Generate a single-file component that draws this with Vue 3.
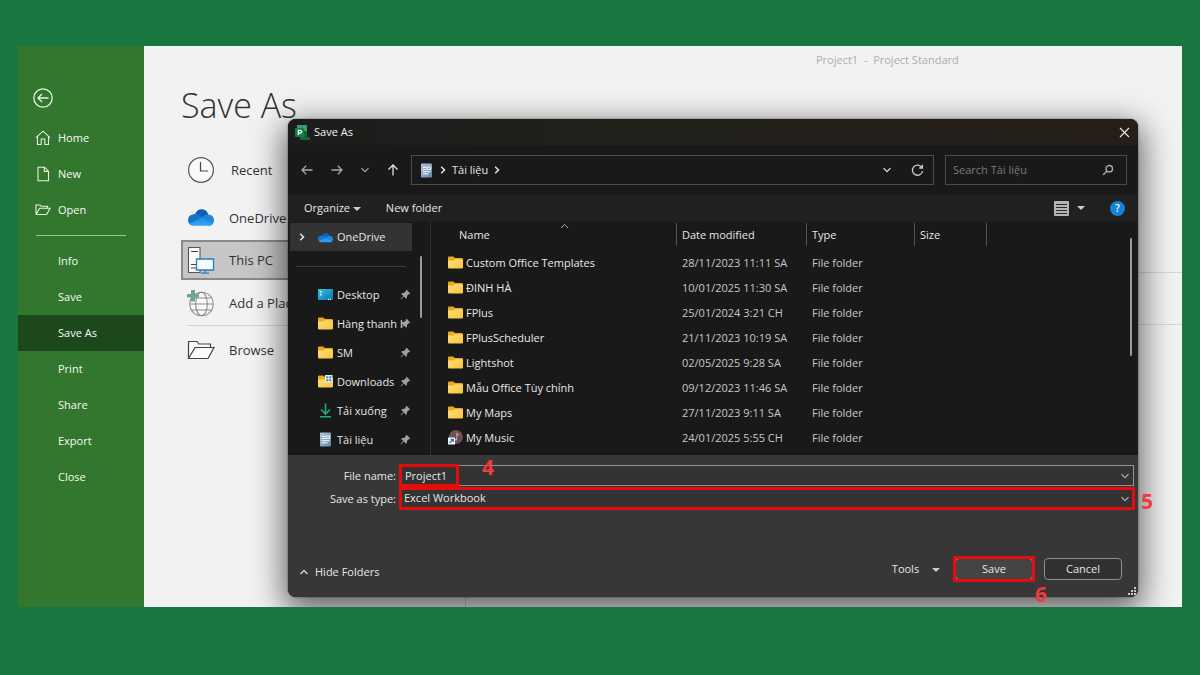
<script setup>
import { ref } from 'vue'

const mainNav = [
  { label: 'Home', icon: 'home' },
  { label: 'New', icon: 'new' },
  { label: 'Open', icon: 'open' },
]
const fileNav = ['Info', 'Save', 'Save As', 'Print', 'Share', 'Export', 'Close']

const pinned = [
  { label: 'Desktop', icon: 'desktop' },
  { label: 'Hàng thanh l', icon: 'folder' },
  { label: 'SM', icon: 'folder' },
  { label: 'Downloads', icon: 'downloads' },
  { label: 'Tải xuống', icon: 'arrow' },
  { label: 'Tài liệu', icon: 'doc' },
]

const files = [
  { name: 'Custom Office Templates', date: '28/11/2023 11:11 SA', icon: 'folder' },
  { name: 'ĐINH HÀ', date: '10/01/2025 11:30 SA', icon: 'folder' },
  { name: 'FPlus', date: '25/01/2024 3:21 CH', icon: 'folder' },
  { name: 'FPlusScheduler', date: '21/11/2023 10:19 SA', icon: 'folder' },
  { name: 'Lightshot', date: '02/05/2025 9:28 SA', icon: 'folder' },
  { name: 'Mẫu Office Tùy chỉnh', date: '09/12/2023 11:46 SA', icon: 'folder' },
  { name: 'My Maps', date: '27/11/2023 9:11 SA', icon: 'folder' },
  { name: 'My Music', date: '24/01/2025 5:55 CH', icon: 'music' },
]

const fileName = ref('Project1')
const fileType = ref('Excel Workbook')
</script>

<template>
  <div class="page">
    <svg class="defs" aria-hidden="true">
      <defs>
        <linearGradient id="g-folder" x1="0" y1="0" x2="1" y2="1">
          <stop offset="0" stop-color="#ffe07d" />
          <stop offset="1" stop-color="#f8c33c" />
        </linearGradient>
        <linearGradient id="g-desk" x1="0" y1="0" x2="1" y2="1">
          <stop offset="0" stop-color="#35c8e0" />
          <stop offset="1" stop-color="#0c6fb4" />
        </linearGradient>
        <linearGradient id="g-doc" x1="0" y1="0" x2="1" y2="1">
          <stop offset="0" stop-color="#b3c9e0" />
          <stop offset="1" stop-color="#6583a6" />
        </linearGradient>
        <linearGradient id="g-cloud" x1="0" y1="0" x2="0" y2="1">
          <stop offset="0" stop-color="#1f8fe4" />
          <stop offset="1" stop-color="#2fa8f2" />
        </linearGradient>
      </defs>
      <symbol id="i-folder" viewBox="0 0 15 13">
        <path d="M0 1.5Q0 .5 1 .5H5.2L7 2H13.5Q15 2 15 3.2V7H0Z" fill="#eba91c" />
        <path d="M0 4.5H5.4L7 3.2H14Q15 3.2 15 4.2V11.5Q15 12.5 14 12.5H1Q0 12.5 0 11.5Z" fill="url(#g-folder)" />
      </symbol>
      <symbol id="i-downloads" viewBox="0 0 15 13">
        <path d="M0 1.5Q0 .5 1 .5H5.2L7 2H13.5Q15 2 15 3.2V7H0Z" fill="#eba91c" />
        <path d="M0 4.5H5.4L7 3.2H14Q15 3.2 15 4.2V11.5Q15 12.5 14 12.5H1Q0 12.5 0 11.5Z" fill="url(#g-folder)" />
        <path d="M7 0H14.5V7.5H7Z" fill="#e8eef2" />
        <path d="M8.3 1.3H10.3V3.2H8.3ZM11.3 1.3H13.3V3.2H11.3ZM8.3 4.2H10.3V6.2H8.3ZM11.3 4.2H13.3V6.2H11.3Z" fill="#4a86a8" />
      </symbol>
      <symbol id="i-desktop" viewBox="0 0 15 13">
        <rect x="0" y="1" width="15" height="11" rx="1" fill="url(#g-desk)" />
        <path d="M2 3H3.6V4.6H2ZM2 5.8H3.6V7.4H2Z" fill="#e6fbff" />
        <path d="M10 10.8H11V12H10ZM12 10.8H13V12H12Z" fill="#d8f4ff" />
      </symbol>
      <symbol id="i-arrow" viewBox="0 0 15 15">
        <path d="M7.5 .5V10.5M3 6.5L7.5 11L12 6.5M2 13.8H13" fill="none" stroke="#22a884" stroke-width="1.6" />
      </symbol>
      <symbol id="i-doc" viewBox="0 0 15 15">
        <rect x="2" y=".5" width="11" height="14" rx=".8" fill="url(#g-doc)" />
        <path d="M4 4.5H7M8 4H11.5V6.5H8ZM4 6.5H7M4 8.7H11.5M4 10.8H9.5" fill="none" stroke="#f4f8fc" stroke-width="1" />
      </symbol>
      <symbol id="i-music" viewBox="0 0 15 15">
        <circle cx="7.8" cy="7" r="7" fill="#7a4f50" />
        <circle cx="9" cy="8" r="3.6" fill="#4d4a68" opacity=".7" />
        <path d="M8.8 9.5V3.2Q9 5 11 5.6" fill="none" stroke="#c9b8c4" stroke-width=".9" />
        <circle cx="8" cy="9.7" r="1" fill="#c9b8c4" />
        <rect x="0" y="7.5" width="7" height="7" fill="#f6f8fa" />
        <path d="M1.5 13L4.8 9.8M2.7 9.3H5.3V11.9" fill="none" stroke="#1976c8" stroke-width="1.2" />
      </symbol>
      <symbol id="i-cloud" viewBox="0 0 26 17">
        <path d="M7 5.5Q9 .3 13.5 .3Q18.5 .3 20.3 5.4L14 11Z" fill="#0c5fb3" />
        <path d="M5 16.5Q0 15.8 0 11Q.2 6 5.3 5.2Q8 4.3 11 6L20 11Z" fill="#1276d0" />
        <path d="M12 9.5L17 6.3Q19 5 21 5.6Q26 6.8 26 11.5Q25.6 16.2 21 16.7Z" fill="#1c86dd" />
        <path d="M1.6 14.6L13.5 8.8L25 14.7Q23.5 16.8 20.8 16.8H5.5Q3 16.6 1.6 14.6Z" fill="url(#g-cloud)" />
      </symbol>
      <symbol id="i-pin" viewBox="0 0 11 11">
        <path d="M6.6 .8L10.2 4.4L9.4 5.2L8.9 5L7 7L6.9 9L6 9.7L3.9 7.6L1.2 10.2L.7 10.3L.8 9.8L3.4 7.1L1.3 5L2 4.1L4 4L6 2.1L5.8 1.6Z" fill="#9aa2a8" />
      </symbol>
      <symbol id="i-down" viewBox="0 0 10 10">
        <path d="M1.5 3.2L5 6.7L8.5 3.2" fill="none" stroke="currentColor" stroke-width="1.2" />
      </symbol>
      <symbol id="i-right" viewBox="0 0 10 10">
        <path d="M3.2 1.8L6.5 5L3.2 8.2" fill="none" stroke="currentColor" stroke-width="1.5" />
      </symbol>
    </svg>

    <main class="window">
      <nav class="sidebar">
        <button class="back" aria-label="Back">
          <svg width="20" height="20" viewBox="0 0 20 20" fill="none" stroke="#e6f2e2" stroke-width="1.3">
            <circle cx="10" cy="10" r="9.2" />
            <path d="M15.5 10H5.2M9 6L5 10L9 14" />
          </svg>
        </button>
        <a v-for="n in mainNav" :key="n.label" href="#" class="nav-item">
          <svg width="16" height="16" viewBox="0 0 16 16" fill="none" stroke="#e6f2e2" stroke-width="1.1">
            <path v-if="n.icon === 'home'" d="M1 7.6L8 1.2L15 7.6M2.5 6.4V14.5H6.2V9H9.8V14.5H13.5V6.4" />
            <path v-else-if="n.icon === 'new'" d="M3 1.2H9.5L13.5 5.2V14.8H3ZM9.3 1.4V5.4H13.3" />
            <path v-else d="M1 12.5V3H5L6.2 4.3H12.5V6.2M1 12.5H11.6L15.2 6.2H4.6L1.2 12.3" />
          </svg>
          <span>{{ n.label }}</span>
        </a>
        <hr class="nav-line" />
        <a v-for="n in fileNav" :key="n" href="#" class="nav-item plain" :class="{ active: n === 'Save As' }">{{ n }}</a>
      </nav>

      <section class="places">
        <h1>Save As</h1>
        <button class="place recent">
          <svg width="28" height="28" viewBox="0 0 28 28" fill="none">
            <circle cx="14" cy="14" r="12.4" fill="#fafafa" stroke="#555" stroke-width="1.2" />
            <path d="M13.5 6V15H21" stroke="#444" stroke-width="1.2" />
          </svg>
          <span>Recent</span>
        </button>
        <button class="place cloud">
          <svg width="28" height="18"><use href="#i-cloud" x="1" width="26" height="17" /></svg>
          <span>OneDrive</span>
        </button>
        <button class="place selected">
          <svg width="28" height="28" viewBox="0 0 28 28" fill="none">
            <path d="M1.5 1.5H13V26.5H1.5Z" fill="#fafafa" stroke="#555" stroke-width="1.1" />
            <path d="M4 5.5H11M4 18.5H9M4 22H9" stroke="#444" stroke-width="1.2" />
            <path d="M9.5 13H26.5V24H9.5Z" fill="#f6fbff" stroke="#2e7cb8" stroke-width="1.3" />
            <path d="M18 24V27M14 27.2H22" stroke="#2e7cb8" stroke-width="1.3" />
          </svg>
          <span>This PC</span>
        </button>
        <button class="place add">
          <svg width="28" height="28" viewBox="0 0 28 28" fill="none">
            <g stroke="#8c8c8c" stroke-width="1.1">
              <circle cx="14.5" cy="15" r="11.7" fill="#f8f8f8" />
              <ellipse cx="14.5" cy="15" rx="5.8" ry="11.7" />
              <path d="M3 15H26M5 9H24M5 21H24" />
            </g>
            <path d="M4 1H8V5H12V8.5H8V12.5H4V8.5H0V5H4Z" fill="#6fa594" />
          </svg>
          <span>Add a Place</span>
        </button>
        <hr class="place-line" />
        <button class="place browse">
          <svg width="28" height="20" viewBox="0 0 28 20" fill="none" stroke="#444" stroke-width="1.2">
            <path d="M1.5 18.5V1.5H10L12 4H23.5V7.5" fill="#fafafa" />
            <path d="M1.5 18.5H21L27 7.5H8Z" fill="#fafafa" />
          </svg>
          <span>Browse</span>
        </button>
      </section>

      <section class="detail">
        <p class="doc-title">Project1&nbsp; -&nbsp; Project Standard</p>
        <div class="detail-body">
          <div class="detail-row"></div>
        </div>
      </section>

      <section class="dialog" role="dialog" aria-label="Save As">
        <header class="titlebar">
          <svg width="15" height="15" viewBox="0 0 15 15">
            <path d="M2 0H12V8H2Z" fill="#33a06b" />
            <path d="M5 6H12V12L15 12V15H5Z" fill="#17633c" />
            <rect x="0" y="3" width="9" height="9" rx="1" fill="#138048" />
            <path d="M3.4 10V5.4H5.2A1.4 1.4 0 0 1 5.2 8.2H3.6" fill="none" stroke="#fff" stroke-width="1.3" />
          </svg>
          <h2>Save As</h2>
          <button class="close" aria-label="Close">
            <svg width="11" height="11" viewBox="0 0 11 11" stroke="#eee" stroke-width="1.1"><path d="M1 1L10 10M10 1L1 10" /></svg>
          </button>
        </header>

        <div class="navbar">
          <div class="arrows">
            <button aria-label="Back"><svg class="dim" width="14" height="14" viewBox="0 0 14 14"><path d="M12.5 7H2M6.2 2.8L2 7L6.2 11.2" /></svg></button>
            <button aria-label="Forward"><svg class="dim" width="14" height="14" viewBox="0 0 14 14"><path d="M1.5 7H12M7.8 2.8L12 7L7.8 11.2" /></svg></button>
            <button aria-label="Recent locations"><svg class="small" width="10" height="10"><use href="#i-down" width="10" height="10" /></svg></button>
            <button aria-label="Up"><svg class="bright" width="14" height="14" viewBox="0 0 14 14"><path d="M7 12.5V2M2.5 6.5L7 2L11.5 6.5" /></svg></button>
          </div>
          <div class="address">
            <svg width="15" height="15"><use href="#i-doc" width="15" height="15" /></svg>
            <svg width="10" height="10"><use href="#i-right" width="10" height="10" /></svg>
            <button class="crumb">Tài liệu</button>
            <svg width="10" height="10"><use href="#i-right" width="10" height="10" /></svg>
            <button class="push" aria-label="Previous locations"><svg width="10" height="10"><use href="#i-down" width="10" height="10" /></svg></button>
            <button aria-label="Refresh">
              <svg width="13" height="13" viewBox="0 0 13 13" fill="none" stroke="#ccc" stroke-width="1.3">
                <path d="M11 3.6A5.1 5.1 0 1 0 11.6 7M11.4 .8V4H8.2" />
              </svg>
            </button>
          </div>
          <label class="search">
            <input type="text" placeholder="Search Tài liệu" aria-label="Search Tài liệu" />
            <svg width="12" height="12" viewBox="0 0 12 12" fill="none" stroke="#aaa" stroke-width="1.4">
              <circle cx="7.3" cy="4.7" r="3.2" />
              <path d="M5 7L1.2 10.8" />
            </svg>
          </label>
        </div>

        <div class="toolbar">
          <button>Organize <i class="tri"></i></button>
          <button>New folder</button>
          <button class="view" aria-label="Change view">
            <svg width="15" height="15" viewBox="0 0 15 15">
              <rect width="15" height="15" rx="1" fill="#b4b4b4" />
              <path d="M2 3.5H13M2 6.5H13M2 9.5H13M2 12.5H13" stroke="#2a2a2a" stroke-width="1" />
            </svg>
            <i class="tri"></i>
          </button>
          <button class="help" aria-label="Help">?</button>
        </div>

        <div class="browser">
          <div class="tree">
            <button class="tree-item root">
              <svg width="10" height="12"><use href="#i-right" width="10" height="12" /></svg>
              <svg width="15" height="11"><use href="#i-cloud" width="15" height="11" /></svg>
              <span>OneDrive</span>
            </button>
            <hr />
            <button v-for="p in pinned" :key="p.label" class="tree-item">
              <svg width="15" height="15"><use :href="'#i-' + p.icon" width="15" height="15" /></svg>
              <span>{{ p.label }}</span>
              <svg class="pin" width="11" height="11"><use href="#i-pin" width="11" height="11" /></svg>
            </button>
            <i class="thumb"></i>
          </div>
          <div class="list">
            <table>
              <colgroup><col class="c-name" /><col class="c-date" /><col class="c-type" /><col class="c-size" /><col /></colgroup>
              <thead>
                <tr>
                  <th class="first">
                    <div>Name</div>
                    <svg class="sort" width="9" height="6" viewBox="0 0 9 6" fill="none" stroke="#aaa"><path d="M1 5L4.5 1.3L8 5" /></svg>
                  </th>
                  <th><div>Date modified</div></th>
                  <th><div>Type</div></th>
                  <th><div>Size</div></th>
                  <th><div></div></th>
                </tr>
              </thead>
              <tbody>
                <tr v-for="f in files" :key="f.name">
                  <td class="name"><div><svg width="15" height="15"><use :href="'#i-' + f.icon" width="15" height="15" /></svg>{{ f.name }}</div></td>
                  <td>{{ f.date }}</td>
                  <td>File folder</td>
                  <td></td>
                  <td></td>
                </tr>
              </tbody>
            </table>
            <i class="thumb"></i>
          </div>
        </div>

        <footer class="footer">
          <div class="field">
            <label for="fname">File name:</label>
            <div class="control">
              <input id="fname" v-model="fileName" type="text" />
              <svg width="10" height="10"><use href="#i-down" width="10" height="10" /></svg>
              <i class="mark mark-name"></i>
              <b class="step step-4">4</b>
            </div>
          </div>
          <div class="field">
            <label for="ftype">Save as type:</label>
            <div class="control">
              <select id="ftype" v-model="fileType"><option>Excel Workbook</option></select>
              <svg width="10" height="10"><use href="#i-down" width="10" height="10" /></svg>
              <i class="mark"></i>
              <b class="step step-5">5</b>
            </div>
          </div>
          <div class="actions">
            <button class="hide">
              <svg width="10" height="10" viewBox="0 0 10 10" fill="none" stroke="#ccc" stroke-width="1.4"><path d="M1.5 7L5 3.4L8.5 7" /></svg>
              Hide Folders
            </button>
            <button class="tools">Tools <i class="tri"></i></button>
            <div class="save-wrap">
              <button class="btn save">Save</button>
              <i class="mark"></i>
              <b class="step step-6">6</b>
            </div>
            <button class="btn">Cancel</button>
          </div>
          <svg class="grip" width="8" height="8" viewBox="0 0 8 8" fill="#c8c8c8">
            <path d="M6 0H8V2H6ZM3 3H5V5H3ZM6 3H8V5H6ZM0 6H2V8H0ZM3 6H5V8H3ZM6 6H8V8H6Z" />
          </svg>
        </footer>
      </section>
    </main>
  </div>
</template>

<style>
body {
  background: #187741;
}
</style>

<style scoped>
.page {
  box-sizing: border-box;
  min-height: 100vh;
  padding: 46px 18px 68px;
  display: flex;
  background: #187741;
  font-family: 'Open Sans', 'Noto Sans', sans-serif;
  font-size: 11px;
  line-height: 16px;
}
.page * {
  box-sizing: border-box;
}
.defs {
  position: absolute;
  width: 0;
  height: 0;
}
button,
input,
select {
  font: inherit;
  color: inherit;
  background: none;
  border: 0;
  padding: 0;
  margin: 0;
}
svg {
  flex: none;
  display: block;
}
h1,
h2,
p {
  margin: 0;
  font-weight: 400;
}
.window {
  position: relative;
  flex: 1;
  display: grid;
  grid-template-columns: 126px 321px 1fr;
  background: #f2f2f2;
  overflow: hidden;
}

/* green navigation column */
.sidebar {
  background: #33772f;
  color: #f4faf2;
  padding-top: 42px;
}
.back {
  display: block;
  margin: 0 0 12px 15px;
}
.nav-item {
  display: flex;
  align-items: center;
  gap: 7px;
  height: 36px;
  padding-left: 17px;
  color: inherit;
  text-decoration: none;
  font-weight: 500;
}
.plain {
  padding-left: 40px;
}
.active {
  background: #1c481b;
}
.nav-line {
  margin: 7px 18px;
  border: 0;
  border-top: 1px solid #9cc493;
}

/* list of save places */
.places {
  padding: 35px 0 0 37px;
  color: #333;
  font-size: 13px;
}
h1 {
  font-size: 34px;
  font-weight: 300;
  line-height: 48px;
  margin-bottom: 17px;
}
.place {
  display: flex;
  align-items: center;
  gap: 14px;
  width: 100%;
  height: 40px;
  padding-left: 6px;
  text-align: left;
}
.recent {
  height: 48px;
  gap: 16px;
}
.cloud {
  height: 46px;
  padding-top: 2px;
}
.selected {
  background: #c6c6c6;
  border: 2px solid #8a8a8a;
  padding-left: 4px;
}
.add {
  height: 45px;
}
.place-line {
  margin: 0 6px;
  border: 0;
  border-top: 1px solid #d4d4d4;
}
.browse {
  height: 48px;
}

.doc-title {
  padding: 6px 0 0 351px;
  color: #adadad;
  white-space: nowrap;
}
.detail {
  display: flex;
  flex-direction: column;
}
.detail-body {
  flex: 1;
  margin-top: 204px;
  border-left: 1px solid #d6d6d6;
}
.detail-row {
  height: 53px;
  border: 1px solid #d6d6d6;
  border-width: 1px 0;
}

/* dialog */
.dialog {
  position: absolute;
  top: 73px;
  left: 270px;
  right: 44px;
  background: #191919;
  color: #e6e6e6;
  border-radius: 8px;
  box-shadow: 0 0 2px #0008, 0 10px 32px 4px #0009;
}
.titlebar {
  display: flex;
  align-items: center;
  height: 26px;
  padding: 0 8px 0 7px;
  gap: 4px;
  background: linear-gradient(90deg, #1c1c1c, #21201b 40%, #251e19);
  border-radius: 8px 8px 0 0;
}
h2 {
  font-size: 11px;
  color: #f2f2f2;
}
.close {
  margin-left: auto;
}
.navbar {
  display: flex;
  align-items: center;
  height: 49px;
  padding: 1px 11px 0 12px;
}
.arrows {
  display: flex;
  align-items: center;
  width: 111px;
  gap: 16px;
}
.arrows svg {
  fill: none;
  stroke-width: 1.3;
}
.dim {
  stroke: #a8a8a8;
}
.small {
  color: #a8a8a8;
}
.bright {
  stroke: #e2e2e2;
}
.address {
  display: flex;
  align-items: center;
  flex: 1;
  height: 30px;
  gap: 4px;
  padding: 0 9px 0 7px;
  border: 1px solid #4c4c4c;
}
.push {
  margin-left: auto;
  margin-right: 15px;
}
.search {
  display: flex;
  align-items: center;
  width: 182px;
  height: 30px;
  margin-left: 11px;
  padding: 0 12px 0 7px;
  border: 1px solid #4c4c4c;
}
.search input {
  flex: 1;
  min-width: 0;
  outline: 0;
}
.search input::placeholder {
  color: #7a7a7a;
  opacity: 1;
}
.toolbar {
  display: flex;
  align-items: center;
  height: 28px;
  padding: 0 13px 0 16px;
  gap: 25px;
  background: #202020;
}
.tri {
  display: inline-block;
  border: 4px solid transparent;
  border-top-color: #ccc;
  border-bottom: 0;
  vertical-align: 1px;
}
.view {
  display: flex;
  align-items: center;
  gap: 8px;
  margin-left: auto;
}
.help {
  width: 15px;
  height: 15px;
  line-height: 15px;
  border-radius: 50%;
  background: #1683d8;
  color: #fff;
  font-size: 10px;
  font-weight: 600;
}
.browser {
  display: flex;
  height: 233px;
  overflow: hidden;
}
.tree {
  position: relative;
  width: 143px;
  padding: 1px 18px 0 2px;
  border-right: 1px solid #303030;
}
.tree hr {
  margin: 15px 6px 13px;
  border: 0;
  border-top: 1px solid #3c3c3c;
}
.tree-item {
  display: flex;
  align-items: center;
  gap: 4px;
  width: 100%;
  height: 29px;
  padding: 0 1px 0 28px;
  text-align: left;
}
.tree-item span {
  flex: 1;
  min-width: 0;
  white-space: nowrap;
}
.root {
  height: 28px;
  padding-left: 7px;
  background: #333;
}
.root svg:first-child {
  margin-right: 7px;
}
.thumb {
  position: absolute;
  width: 2px;
  border-radius: 1px;
  background: #9a9a9a;
}
.tree .thumb {
  top: 34px;
  right: 8px;
  height: 62px;
}
.list {
  position: relative;
  flex: 1;
}
.list .thumb {
  top: 16px;
  right: 6px;
  height: 118px;
}
table {
  width: 100%;
  table-layout: fixed;
  border-collapse: collapse;
}
.c-name {
  width: 245px;
}
.c-date {
  width: 130px;
}
.c-type {
  width: 108px;
}
.c-size {
  width: 72px;
}
th {
  position: relative;
  height: 28px;
  padding: 1px 0 0;
  vertical-align: top;
  text-align: left;
  font-weight: 400;
}
th div {
  display: flex;
  align-items: center;
  height: 23px;
  padding-left: 5px;
  border-left: 1px solid #555;
}
.first div {
  padding-left: 27px;
  border-color: transparent;
}
.sort {
  position: absolute;
  top: 1px;
  right: 107px;
}
td {
  height: 25px;
  padding: 0 0 0 6px;
  color: #c8c8c8;
  white-space: nowrap;
}
td.name {
  padding-left: 17px;
  color: #e8e8e8;
}
.name div {
  display: flex;
  align-items: center;
  gap: 3px;
}

/* name, type and action rows */
.footer {
  position: relative;
  padding: 10px 4px 17px 11px;
  background: #373737;
  border-radius: 0 0 8px 8px;
}
.field {
  display: flex;
  align-items: center;
  gap: 4px;
  height: 21px;
  margin-bottom: 2px;
}
.field label {
  width: 97px;
  text-align: right;
}
.control {
  position: relative;
  display: flex;
  align-items: center;
  flex: 1;
  height: 21px;
  padding-right: 3px;
  border: 1px solid #909090;
  background: #333;
}
.control svg {
  color: #b0b0b0;
}
.control input,
.control select {
  flex: 1;
  height: 18px;
  padding: 0 0 1px 4px;
  appearance: none;
  outline: 0;
}
.control select {
  padding-left: 3px;
}
.mark {
  position: absolute;
  inset: -2px;
  border: 3px solid #e60c0c;
  border-radius: 1px;
  pointer-events: none;
}
.mark-name {
  right: auto;
  width: 60px;
}
.step {
  position: absolute;
  font-size: 21px;
  line-height: 24px;
  color: #f03a3c;
}
.step-4 {
  left: 81px;
  top: -11px;
}
.step-5 {
  right: -20px;
  top: 0;
}
.step-6 {
  right: -14px;
  top: 24px;
}
.actions {
  display: flex;
  align-items: center;
  gap: 11px;
  margin-top: 49px;
  padding-right: 12px;
}
.hide {
  display: flex;
  align-items: center;
  align-self: flex-end;
  gap: 6px;
  margin-right: auto;
}
.tools {
  margin-right: 4px;
}
.tools .tri {
  margin-left: 10px;
}
.save-wrap {
  position: relative;
}
.btn {
  display: block;
  width: 78px;
  height: 22px;
  border: 1px solid #8f8f8f;
  border-radius: 4px;
  background: #303030;
}
.save {
  background: #444;
}
.grip {
  position: absolute;
  right: 2px;
  bottom: 2px;
}
</style>
